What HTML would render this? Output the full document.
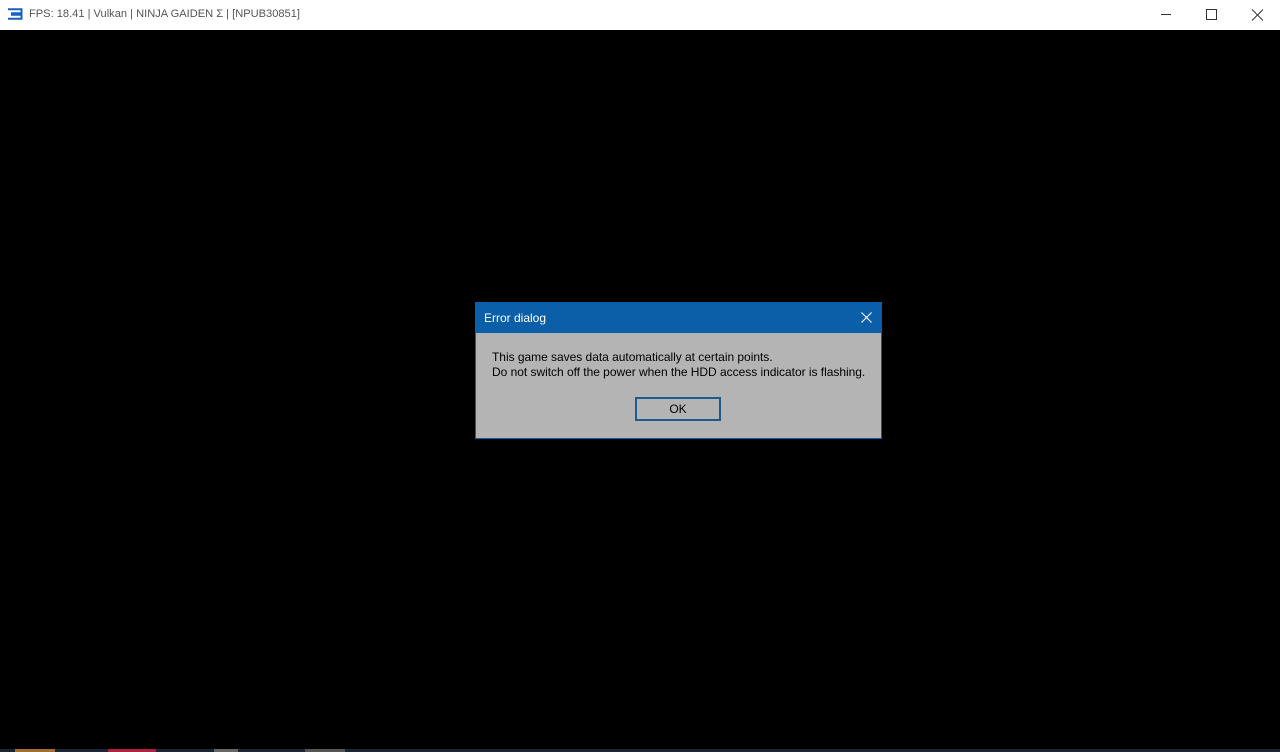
<!DOCTYPE html>
<html><head><meta charset="utf-8"><style>
html,body{margin:0;padding:0;width:1280px;height:752px;overflow:hidden;background:#000;font-family:"Liberation Sans",sans-serif}
.tb{position:absolute;left:0;top:0;width:1280px;height:30px;background:#fff}
.tt{position:absolute;left:29px;top:8px;font-size:11.1px;color:#555}
.dlg{position:absolute;left:475px;top:302px;width:405px;height:135px;border:1px solid #0a5fa8;background:#b4b4b4}
.dh{height:30px;background:#0a5fa8;color:#fff;font-size:12px;line-height:30px;padding-left:8px;position:relative}
.msg{position:absolute;left:16px;top:47px;font-size:12px;line-height:15px;color:#000;letter-spacing:-0.03px}
.ok{position:absolute;left:159px;top:94px;width:82px;height:20px;border:2px solid #1e5a8c;box-sizing:content-box;background:#b4b4b4;text-align:center;font-size:12px;line-height:20px}
.strip{position:absolute;left:0;top:749px;width:1280px;height:3px;background:#1b2433}
</style></head><body>
<div class="tb">
<svg style="position:absolute;left:7px;top:8px" width="16" height="12" viewBox="0 0 16 12"><path d="M1 1.2H14.5V5.2H4M4 6.8H14.5V10.8H1" fill="none" stroke="#1760c0" stroke-width="2"/></svg>
<div class="tt">FPS: 18.41 | Vulkan | NINJA GAIDEN Σ | [NPUB30851]</div>
<svg style="position:absolute;left:1160px;top:9px" width="110" height="12" viewBox="0 0 110 12">
<path d="M1 5.5H11" stroke="#333" stroke-width="1"/>
<rect x="46.5" y="0.5" width="10" height="10" fill="none" stroke="#333"/>
<path d="M92 0.5L103 11.5M103 0.5L92 11.5" stroke="#333" stroke-width="1"/>
</svg>
</div>
<div class="dlg">
<div class="dh">Error dialog
<svg style="position:absolute;right:9px;top:9px" width="11" height="11" viewBox="0 0 11 11"><path d="M0.5 0.5L10.5 10.5M10.5 0.5L0.5 10.5" stroke="#fff" stroke-width="1.1"/></svg>
</div>
<div class="msg">This game saves data automatically at certain points.<br>Do not switch off the power when the HDD access indicator is flashing.</div>
<div class="ok">OK</div>
</div>
<div class="strip"></div>
<div style="position:absolute;left:15px;top:749px;width:40px;height:3px;background:#a07030"></div>
<div style="position:absolute;left:108px;top:749px;width:48px;height:3px;background:#b02040"></div>
<div style="position:absolute;left:214px;top:749px;width:24px;height:3px;background:#666"></div>
<div style="position:absolute;left:305px;top:749px;width:40px;height:3px;background:#555"></div>
</body></html>
